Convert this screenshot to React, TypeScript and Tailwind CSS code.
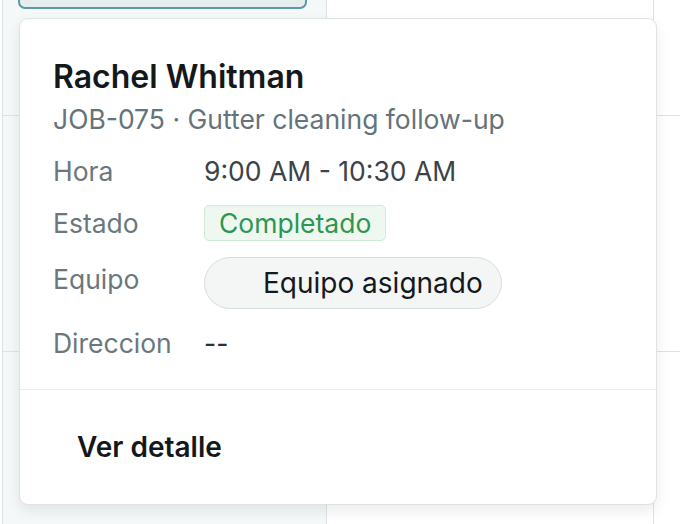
import React from "react";

type Row = { label: string; value: React.ReactNode; tall?: boolean };

function StatusBadge({ text }: { text: string }) {
  return (
    <span className="inline-flex h-[36px] items-center rounded-[5px] border border-[#cfead6] bg-[#eef8f1] px-[14px] text-[26.5px] text-[#2e9650]">
      {text}
    </span>
  );
}

function CrewPill({ text }: { text: string }) {
  return (
    <span className="inline-flex h-[52px] items-center gap-[14px] rounded-full border border-[#d8dede] bg-[#f4f6f6] pl-[12px] pr-[18px] text-[28px] text-[#15191c]">
      <span className="h-[32px] w-[32px] rounded-full" />
      {text}
    </span>
  );
}

function JobPopover() {
  const rows: Row[] = [
    { label: "Hora", value: <span className="text-[#3b4347]">9:00 AM - 10:30 AM</span> },
    { label: "Estado", value: <StatusBadge text="Completado" /> },
    { label: "Equipo", value: <CrewPill text="Equipo asignado" />, tall: true },
    { label: "Direccion", value: <span className="text-[#2a3034]">--</span> },
  ];

  return (
    <div className="absolute left-[19px] top-[18px] w-[638px] rounded-[9px] border border-[#dde3e3] bg-white shadow-[0_6px_14px_rgba(0,0,0,0.08)]">
      <div className="px-[33px] pt-[38px] pb-[28px]">
        <h3 className="text-[32px] font-semibold leading-[40px] text-[#14181b]">Rachel Whitman</h3>
        <p className="mt-[4px] text-[26.5px] leading-[36px] text-[#65737a]">
          JOB-075 · Gutter cleaning follow-up
        </p>
        <div className="mt-[16px] flex flex-col gap-[16px]">
          {rows.map((r) => (
            <div key={r.label} className="grid grid-cols-[151px_1fr] items-start">
              <span
                className={`text-[26.5px] text-[#6b777d] ${r.tall ? "leading-[44px]" : "leading-[36px]"}`}
              >
                {r.label}
              </span>
              <div className="flex text-[26.5px] leading-[36px]">{r.value}</div>
            </div>
          ))}
        </div>
      </div>
      <div className="flex h-[115px] items-center border-t border-[#e8eded] px-[57px]">
        <span className="text-[28px] font-semibold text-[#14181b]">Ver detalle</span>
      </div>
    </div>
  );
}

export default function App() {
  return (
    <div
      className="relative h-[524px] w-[680px] overflow-hidden bg-white"
      style={{ fontFamily: "Inter, 'Noto Sans', sans-serif" }}
    >
      {/* calendar grid behind the popover */}
      <div className="grid h-full grid-cols-[325px_327px_1fr] pl-[2px]">
        <div className="flex flex-col border-x border-[#dde3e3] bg-[#f4f8f8]">
          <div className="h-[116px] border-b border-[#dde3e3]">
            <div className="ml-[15px] mr-[19px] -mt-[20px] h-[29px] rounded-[7px] border-2 border-[#5b9aa1] bg-[#e5eded]" />
          </div>
          <div className="h-[236px] border-b border-[#dde3e3]" />
          <div className="flex-1" />
        </div>
        <div className="flex flex-col border-r border-[#dde3e3]">
          <div className="h-[116px] border-b border-[#dde3e3]" />
          <div className="h-[236px] border-b border-[#dde3e3]" />
          <div className="flex-1" />
        </div>
        <div className="flex flex-col">
          <div className="h-[116px] border-b border-[#dde3e3]" />
          <div className="h-[236px] border-b border-[#dde3e3]" />
          <div className="flex-1" />
        </div>
      </div>
      <JobPopover />
    </div>
  );
}
